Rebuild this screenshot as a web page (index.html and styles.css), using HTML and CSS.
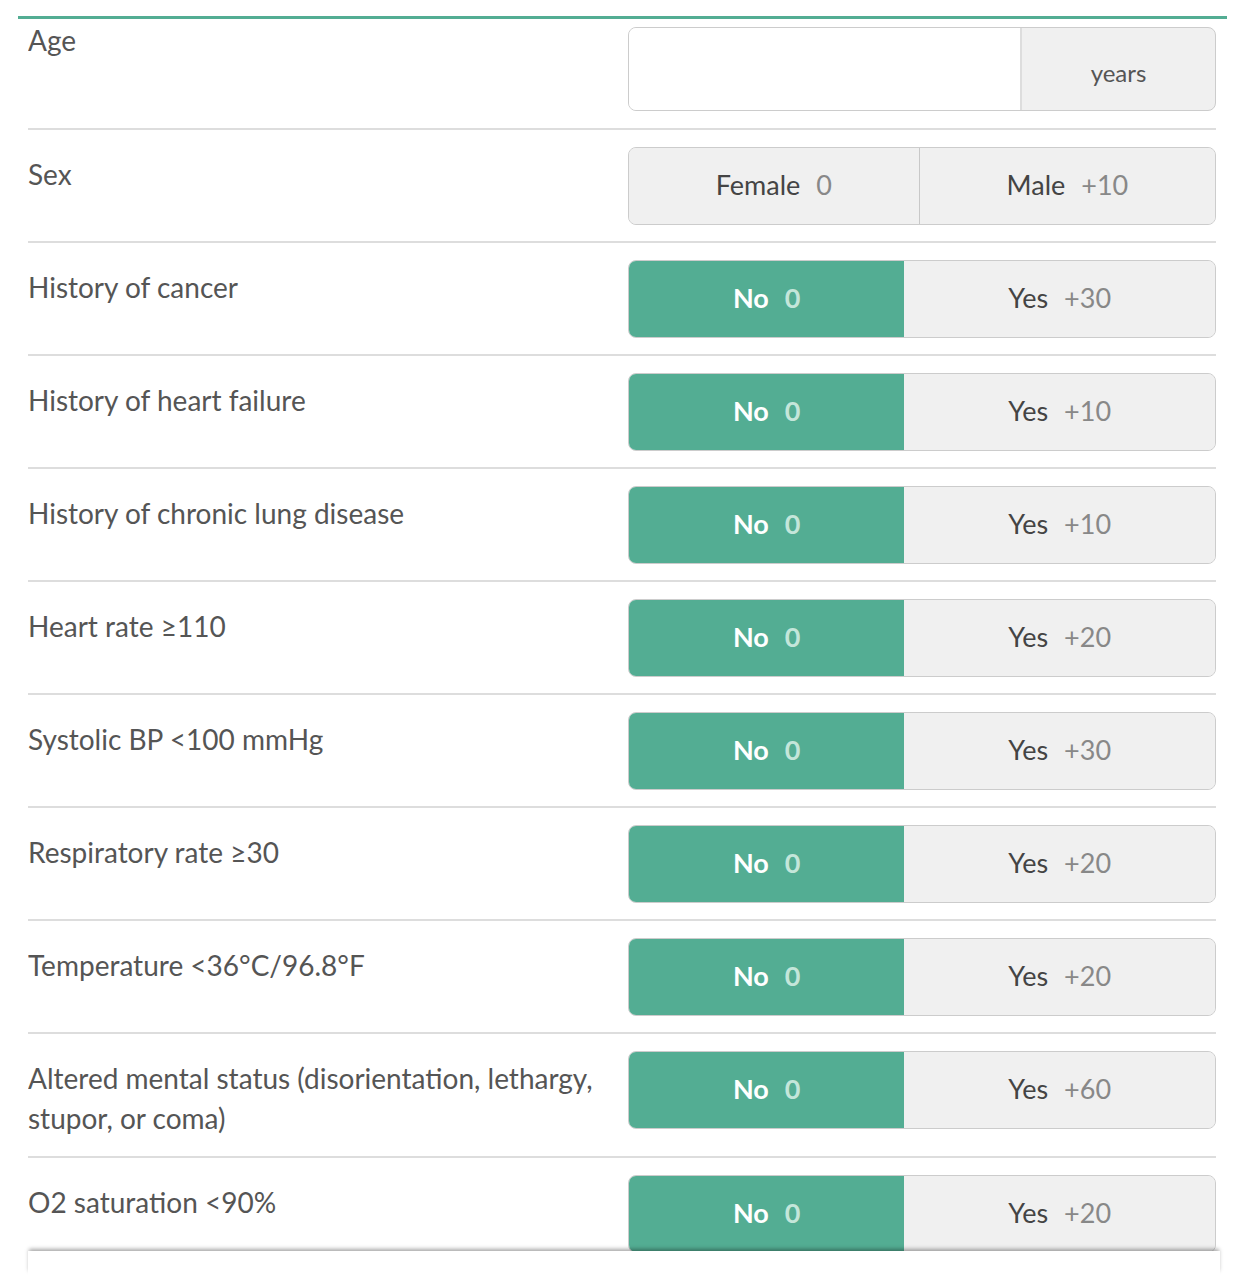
FILE: index.html
```html
<!DOCTYPE html>
<html lang="en">
<head>
    <meta charset="UTF-8">
    <title>Risk score calculator</title>
    <link rel="stylesheet" href="styles.css">
</head>
<body>
    <div class="calc">
        <div class="calc-bar"></div>
        <div class="rows">
            <div class="row row-first">
                <div class="label">Age</div>
                <div class="control input-box">
                    <input type="text" class="num-input">
                    <span class="unit">years</span>
                </div>
            </div>

            <div class="row">
                <div class="label">Sex</div>
                <div class="control toggle">
                    <button class="opt">Female<span class="pts">0</span></button>
                    <button class="opt">Male<span class="pts">+10</span></button>
                </div>
            </div>

            <div class="row">
                <div class="label">History of cancer</div>
                <div class="control toggle">
                    <button class="opt active">No<span class="pts">0</span></button>
                    <button class="opt">Yes<span class="pts">+30</span></button>
                </div>
            </div>

            <div class="row">
                <div class="label">History of heart failure</div>
                <div class="control toggle">
                    <button class="opt active">No<span class="pts">0</span></button>
                    <button class="opt">Yes<span class="pts">+10</span></button>
                </div>
            </div>

            <div class="row">
                <div class="label">History of chronic lung disease</div>
                <div class="control toggle">
                    <button class="opt active">No<span class="pts">0</span></button>
                    <button class="opt">Yes<span class="pts">+10</span></button>
                </div>
            </div>

            <div class="row">
                <div class="label">Heart rate ≥110</div>
                <div class="control toggle">
                    <button class="opt active">No<span class="pts">0</span></button>
                    <button class="opt">Yes<span class="pts">+20</span></button>
                </div>
            </div>

            <div class="row">
                <div class="label">Systolic BP &lt;100 mmHg</div>
                <div class="control toggle">
                    <button class="opt active">No<span class="pts">0</span></button>
                    <button class="opt">Yes<span class="pts">+30</span></button>
                </div>
            </div>

            <div class="row">
                <div class="label">Respiratory rate ≥30</div>
                <div class="control toggle">
                    <button class="opt active">No<span class="pts">0</span></button>
                    <button class="opt">Yes<span class="pts">+20</span></button>
                </div>
            </div>

            <div class="row">
                <div class="label">Temperature &lt;36°C/96.8°F</div>
                <div class="control toggle">
                    <button class="opt active">No<span class="pts">0</span></button>
                    <button class="opt">Yes<span class="pts">+20</span></button>
                </div>
            </div>

            <div class="row">
                <div class="label">Altered mental status (disorientation, lethargy, stupor, or coma)</div>
                <div class="control toggle">
                    <button class="opt active">No<span class="pts">0</span></button>
                    <button class="opt">Yes<span class="pts">+60</span></button>
                </div>
            </div>

            <div class="row">
                <div class="label">O2 saturation &lt;90%</div>
                <div class="control toggle">
                    <button class="opt active">No<span class="pts">0</span></button>
                    <button class="opt">Yes<span class="pts">+20</span></button>
                </div>
            </div>
        </div>
        <div class="fold"></div>
    </div>
</body>
</html>
```

FILE: styles.css
```css
body {
    margin: 0;
    padding: 16px 0 0 0;
    background-color: #FFFFFF;
    font-family: Lato, "Open Sans", sans-serif;
    color: #555555;
}

.calc {
    width: 1209px;
    margin-left: 18px;
}

.calc-bar {
    height: 3px;
    background-color: #53AD93;
}

.rows {
    height: 1232px;
    overflow: hidden;
    margin: 0 11px 0 10px;
}

.row {
    display: grid;
    grid-template-columns: 1fr 588px;
    column-gap: 4px;
    align-items: start;
    padding: 17px 0 16px 0;
    border-bottom: 2px solid #DDDDDD;
}

.row-first {
    padding: 8px 0 17px 0;
}

.label {
    font-size: 28px;
    line-height: 40px;
    padding: 7px 0 2px 0;
}

.row-first .label {
    padding: 0;
    line-height: 26px;
}

.control {
    display: flex;
    height: 78px;
    border: 1px solid #CCCCCC;
    border-radius: 8px;
    overflow: hidden;
    background-color: #F0F0F0;
    box-sizing: border-box;
}

.input-box {
    height: 84px;
}

.num-input {
    width: 393px;
    border: none;
    border-right: 2px solid #DDDDDD;
    background-color: #FFFFFF;
    font-size: 26px;
    padding: 0 16px;
    box-sizing: border-box;
    outline: none;
}

.unit {
    flex: 1;
    display: flex;
    align-items: center;
    justify-content: center;
    padding-top: 6px;
    font-size: 24px;
    color: #555555;
}

.opt {
    flex: 1 1 auto;
    border: none;
    background-color: #F0F0F0;
    font-family: Lato, "Open Sans", sans-serif;
    font-size: 27px;
    color: #444444;
    padding: 0 12px 3px 12px;
    cursor: pointer;
}

.opt + .opt {
    border-left: 1px solid #C8C8C8;
}

.opt .pts {
    margin-left: 16px;
    color: #888888;
}

.opt.active {
    background-color: #53AD93;
    color: #FFFFFF;
    font-weight: bold;
}

.opt.active .pts {
    color: #C4E6DA;
}

.opt.active + .opt {
    border-left: none;
}

.fold {
    position: relative;
    height: 24px;
    margin: 0 7px 0 10px;
    background-color: #FFFFFF;
    box-shadow: 0 -3px 4px -1px rgba(0, 0, 0, 0.35);
}
```
